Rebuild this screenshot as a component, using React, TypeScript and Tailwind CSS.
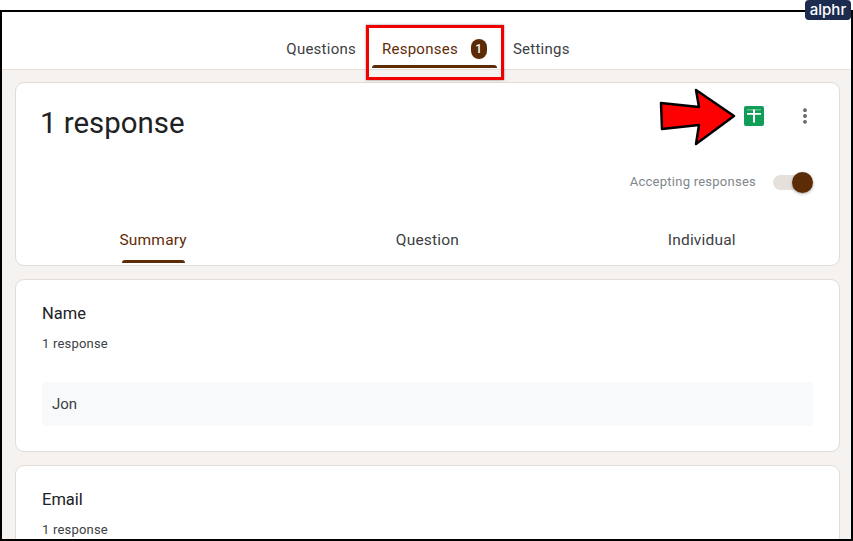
import { MoreVertical } from 'lucide-react';

const Card = ({ title, answer }: { title: string; answer?: string }) => (
  <div className="bg-white border border-[#dfdcda] rounded-[9px] px-[26px] pt-[23px] pb-[25px] shrink-0">
    <div className="text-[16.5px] leading-[22px] text-[#202124]">{title}</div>
    <div className="text-[13px] leading-[16px] text-[#3c4043] mt-[11px] tracking-[0.2px]">1 response</div>
    {answer && (
      <div className="mt-[30px] h-[44px] bg-[#f8f9fa] rounded-[4px] flex items-center px-[10px] text-[15px] text-[#3c4043]">
        {answer}
      </div>
    )}
  </div>
);

export default function App() {
  return (
    <div className="relative w-[853px] h-[541px] overflow-hidden bg-white pt-[10px] font-['Roboto',sans-serif]">
      <div className="h-[531px] border-2 border-black flex flex-col overflow-hidden bg-[#f5f2ef]">
        {/* top tabs */}
        <div className="h-[58px] bg-white border-b border-[#e3e0de] shrink-0 flex justify-center items-start pt-[27px] text-[15px] leading-[20px] tracking-[0.25px] text-[#3c4043]">
          <div className="ml-[3px] flex gap-[26px]">
            <span>Questions</span>
            <span className="flex items-center gap-[13px] text-[#5f2c07]">
              Responses
              <span className="w-[16px] h-[20px] rounded-[8px] bg-[#5c2c06] text-white text-[12px] font-medium flex items-center justify-center">1</span>
            </span>
            <span>Settings</span>
          </div>
        </div>

        <div className="flex flex-col gap-[13px] pl-[13px] pr-[11px] pt-[12px]">
          {/* summary card */}
          <div className="bg-white border border-[#dfdcda] rounded-[9px] h-[184px] shrink-0 flex flex-col">
            <div className="flex justify-between pl-[24px] pr-[24px] pt-[20px] h-[74px]">
              <div className="text-[29.4px] leading-[40px] text-[#202124]">1 response</div>
              <div className="flex items-center gap-[31px] self-start h-[26px]">
                <div className="w-[20px] h-[20px] rounded-[2px] bg-[#0f9d58]">
                  <svg width="20" height="20" viewBox="0 0 20 20">
                    <path d="M3 3.5h14v0.8H3z" fill="#fff" fillOpacity="0.6" />
                    <path d="M9 3.5h2V7h6v1.8h-6V16.5H9V8.8H3V7h6z" fill="#fff" />
                  </svg>
                </div>
                <MoreVertical size={20} strokeWidth={2.6} className="text-[#5f6368]" />
              </div>
            </div>
            <div className="flex justify-end items-center gap-[17px] pr-[26px] h-[26px] mt-[12px]">
              <span className="text-[13px] text-[#80868b] tracking-[0.25px]">Accepting responses</span>
              <div className="relative w-[40px] h-[22px] flex items-center">
                <div className="w-[34px] h-[15px] rounded-full bg-[#e6e0dc]" />
                <div className="absolute right-0 w-[21px] h-[21px] rounded-full bg-[#5c2c06] shadow-[0_1px_3px_rgba(0,0,0,0.35)]" />
              </div>
            </div>
            <div className="flex mt-[35px] text-[15.5px] leading-[20px] tracking-[0.2px] text-[#3c4043]">
              <div className="flex-1 text-center relative text-[#5f2c07]">
                Summary
                <div className="absolute left-[106px] top-[30px] w-[63px] h-[3px] rounded-t-[3px] bg-[#5c2c06]" />
              </div>
              <div className="flex-1 text-center">Question</div>
              <div className="flex-1 text-center">Individual</div>
            </div>
          </div>

          <Card title="Name" answer="Jon" />
          <Card title="Email" />
        </div>
      </div>

      {/* annotations over the screenshot */}
      <div className="absolute left-[366px] top-[25px] w-[138px] h-[55px] border-[3px] border-[#f00000] shadow-[0_0_2px_rgba(0,0,0,0.5)]" />
      <div className="absolute left-[372px] top-[65px] w-[125px] h-[3px] rounded-t-[3px] bg-[#5c2c06]" />
      <svg className="absolute left-[659px] top-[88px]" width="78" height="58" viewBox="0 0 78 58">
        <path d="M2 15 L40 19 L37 2 L75 28 L37 56 L40 37 L3 41 Z" fill="#ff0000" stroke="#000" strokeWidth="2.5" strokeLinejoin="round" />
      </svg>
      <div className="absolute left-[805px] top-0 w-[46px] h-[20px] rounded-[4px] bg-[#1d2b4f] text-white text-[15px] leading-[19px] font-medium text-center font-['Inter',sans-serif]">
        alphr
      </div>
    </div>
  );
}
